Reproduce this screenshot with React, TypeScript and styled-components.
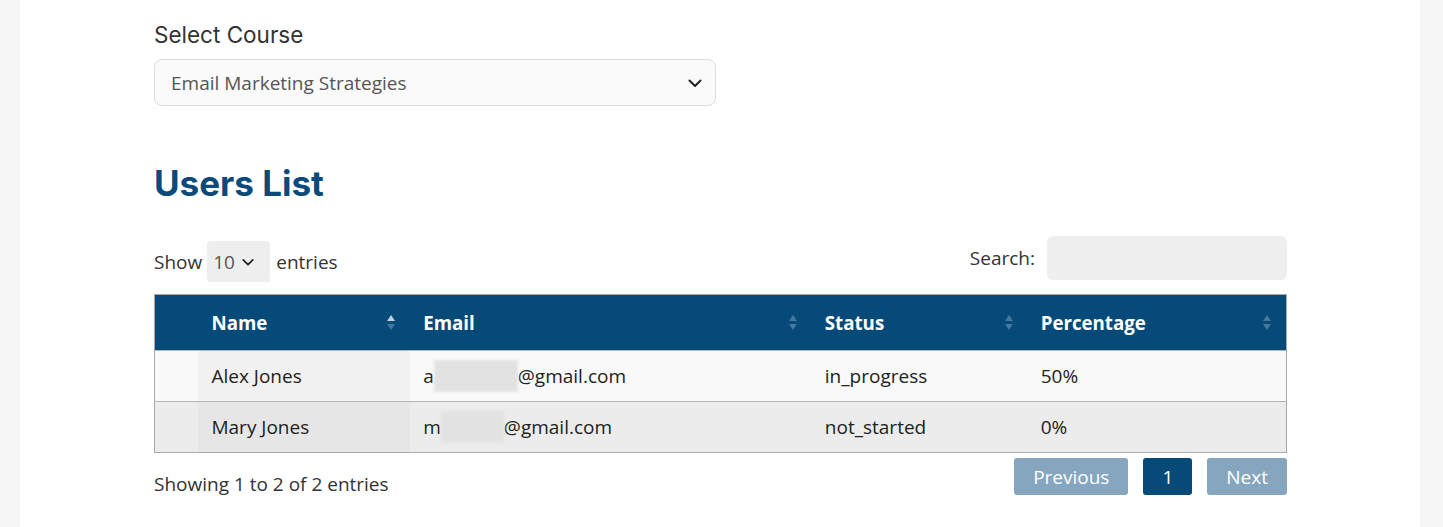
import styled, { createGlobalStyle } from "styled-components";

const GlobalStyle = createGlobalStyle`
  html, body {
    margin: 0;
    padding: 0;
    background: #f7f7f7;
  }
  * {
    box-sizing: border-box;
  }
`;

const Page = styled.div`
  margin: 0 23px 0 20px;
  min-height: 527px;
  background: #ffffff;
  padding: 21px 133px 0 134px;
  font-family: "Open Sans", "Noto Sans", sans-serif;
  color: #333;
`;

const Label = styled.label`
  display: block;
  font-family: Inter, "Liberation Sans", sans-serif;
  font-size: 22.5px;
  color: #333;
  margin-bottom: 11px;
`;

const CourseSelect = styled.div`
  width: 562px;
  height: 47px;
  display: flex;
  align-items: center;
  justify-content: space-between;
  padding: 0 12px 0 16px;
  background: #fafafa;
  border: 1px solid #dcdcdc;
  border-radius: 8px;
  font-size: 19px;
  color: #555;
`;

const Heading = styled.h2`
  margin: 56px 0 32px;
  font-family: Inter, "Liberation Sans", sans-serif;
  font-weight: 700;
  font-size: 35px;
  color: #0b4a7b;
`;

const Controls = styled.div`
  display: flex;
  align-items: flex-start;
  justify-content: space-between;
  margin-bottom: 12px;
`;

const LengthControl = styled.div`
  display: flex;
  align-items: center;
  gap: 5px;
  font-size: 19px;
  margin-top: 5px;
`;

const SmallSelect = styled.div`
  display: flex;
  align-items: center;
  gap: 6px;
  height: 41px;
  width: 63px;
  padding: 0 6px;
  margin-right: 1px;
  background: #eeeeee;
  border-radius: 3px;
  color: #555;
`;

const SearchControl = styled.div`
  display: flex;
  align-items: center;
  gap: 12px;
  font-size: 19px;
`;

const SearchInput = styled.div`
  width: 240px;
  height: 44px;
  background: #eeeeee;
  border-radius: 6px;
`;

const Table = styled.table`
  width: 100%;
  border-collapse: collapse;
  border: 1px solid #a9a9a9;
  font-size: 19px;
`;

const HeadCell = styled.th<{ $w: number }>`
  position: relative;
  width: ${(p) => p.$w}px;
  height: 56px;
  padding: 0 14px 0 13px;
  background: #064a7a;
  color: #fff;
  font-size: 18.7px;
  font-weight: 700;
  text-align: left;
`;

const SortIcon = styled.span`
  position: absolute;
  right: 14px;
  top: 50%;
  transform: translateY(-50%);
  display: flex;
`;

const Row = styled.tr<{ $odd: boolean }>`
  background: ${(p) => (p.$odd ? "#f9f9f9" : "#ececec")};
  border-top: 1px solid #b5b5b5;
`;

const Cell = styled.td<{ $sorted?: boolean; $odd: boolean }>`
  height: 51px;
  padding: 0 14px 0 13px;
  color: #222;
  background: ${(p) =>
    p.$sorted ? (p.$odd ? "#f1f1f1" : "#e6e6e6") : "transparent"};
`;

const Blur = styled.span<{ $w: number }>`
  display: inline-block;
  vertical-align: -9px;
  width: ${(p) => p.$w}px;
  height: 32px;
  background: #e2e2e2;
  filter: blur(1.5px);
`;

const Footer = styled.div`
  display: flex;
  justify-content: space-between;
  align-items: flex-start;
  padding-top: 5px;
`;

const Info = styled.div`
  font-size: 19px;
  margin-top: 13px;
`;

const Pager = styled.div`
  display: flex;
  gap: 15px;
`;

const PageButton = styled.button<{ $active?: boolean }>`
  height: 37px;
  padding: 0 19px;
  border: none;
  border-radius: 3px;
  font-family: "Open Sans", "Noto Sans", sans-serif;
  font-size: 19px;
  color: #fff;
  background: ${(p) => (p.$active ? "#064a7a" : "#86a6bf")};
`;

const Chevron = ({ size = 14 }: { size?: number }) => (
  <svg width={size} height={size} viewBox="0 0 16 16" fill="none">
    <path d="M2.5 5.5 8 11l5.5-5.5" stroke="#222" strokeWidth="2" strokeLinecap="round" strokeLinejoin="round" />
  </svg>
);

const Sort = ({ active }: { active?: boolean }) => (
  <SortIcon>
    <svg width="10" height="20" viewBox="0 0 10 20">
      <path d="M5 2 9 8H1z" fill="#fff" opacity={active ? 0.75 : 0.25} />
      <path d="M5 17 9 11H1z" fill="#fff" opacity={0.25} />
    </svg>
  </SortIcon>
);

const columns = [
  { title: "", w: 44 },
  { title: "Name", w: 212, active: true },
  { title: "Email", w: 402 },
  { title: "Status", w: 216 },
  { title: "Percentage", w: 259 },
];

const users = [
  { name: "Alex Jones", first: "a", blur: 84, rest: "@gmail.com", status: "in_progress", pct: "50%" },
  { name: "Mary Jones", first: "m", blur: 63, rest: "@gmail.com", status: "not_started", pct: "0%" },
];

export default function App() {
  return (
    <>
      <GlobalStyle />
      <Page>
        <Label>Select Course</Label>
        <CourseSelect>
          <span>Email Marketing Strategies</span>
          <Chevron size={16} />
        </CourseSelect>

        <Heading>Users List</Heading>

        <Controls>
          <LengthControl>
            Show
            <SmallSelect>
              10 <Chevron size={14} />
            </SmallSelect>
            entries
          </LengthControl>
          <SearchControl>
            Search:
            <SearchInput />
          </SearchControl>
        </Controls>

        <Table>
          <thead>
            <tr>
              {columns.map((c, i) => (
                <HeadCell key={i} $w={c.w}>
                  {c.title}
                  {i > 0 && <Sort active={c.active} />}
                </HeadCell>
              ))}
            </tr>
          </thead>
          <tbody>
            {users.map((u, i) => {
              const odd = i % 2 === 0;
              return (
                <Row key={u.name} $odd={odd}>
                  <Cell $odd={odd} />
                  <Cell $odd={odd} $sorted>
                    {u.name}
                  </Cell>
                  <Cell $odd={odd}>
                    {u.first}
                    <Blur $w={u.blur} />
                    {u.rest}
                  </Cell>
                  <Cell $odd={odd}>{u.status}</Cell>
                  <Cell $odd={odd}>{u.pct}</Cell>
                </Row>
              );
            })}
          </tbody>
        </Table>

        <Footer>
          <Info>Showing 1 to 2 of 2 entries</Info>
          <Pager>
            <PageButton>Previous</PageButton>
            <PageButton $active>1</PageButton>
            <PageButton>Next</PageButton>
          </Pager>
        </Footer>
      </Page>
    </>
  );
}
